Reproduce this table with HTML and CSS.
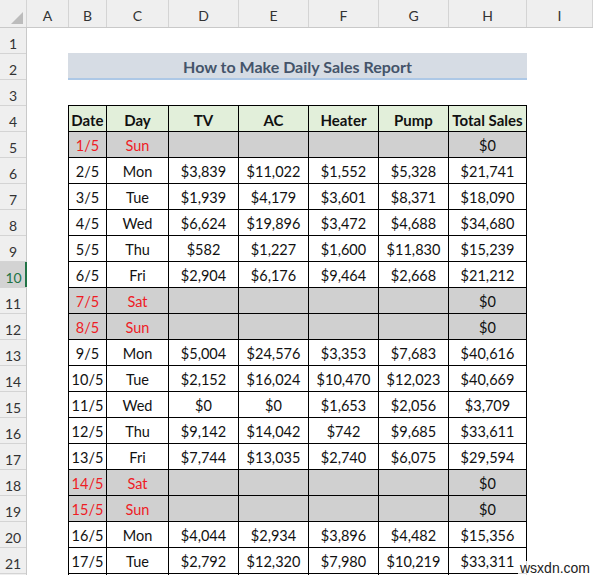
FILE: index.html
```html
<!DOCTYPE html>
<html>
<head>
<meta charset="utf-8">
<link rel="stylesheet" href="styles.css">
</head>
<body>
<div class="app">
  <div class="colbar">
    <div class="corner"><svg width="27" height="28" viewBox="0 0 27 28"><polygon points="23,12 23,24 11,24" fill="#bcbcbc"/></svg></div>
    <div class="ch w-a">A</div>
    <div class="ch w-b">B</div>
    <div class="ch w-c">C</div>
    <div class="ch w-d">D</div>
    <div class="ch w-d">E</div>
    <div class="ch w-d">F</div>
    <div class="ch w-d">G</div>
    <div class="ch w-h">H</div>
    <div class="ch w-i">I</div>
    <div class="ch rest"></div>
  </div>
  <div class="body">
    <div class="rowbar">
      <div class="rh">1</div><div class="rh">2</div><div class="rh">3</div><div class="rh">4</div>
      <div class="rh">5</div><div class="rh">6</div><div class="rh">7</div><div class="rh">8</div>
      <div class="rh">9</div><div class="rh active">10</div><div class="rh">11</div><div class="rh">12</div>
      <div class="rh">13</div><div class="rh">14</div><div class="rh">15</div><div class="rh">16</div>
      <div class="rh">17</div><div class="rh">18</div><div class="rh">19</div><div class="rh">20</div>
      <div class="rh">21</div><div class="rh"></div>
    </div>
    <div class="sheet">
      <div class="title">How to Make Daily Sales Report</div>
      <div class="tbl">
        <div class="c hd">Date</div><div class="c hd">Day</div><div class="c hd">TV</div><div class="c hd">AC</div><div class="c hd">Heater</div><div class="c hd">Pump</div><div class="c hd">Total Sales</div>

        <div class="c we red">1/5</div><div class="c we red">Sun</div><div class="c we"></div><div class="c we"></div><div class="c we"></div><div class="c we"></div><div class="c we">$0</div>
        <div class="c">2/5</div><div class="c">Mon</div><div class="c">$3,839</div><div class="c">$11,022</div><div class="c">$1,552</div><div class="c">$5,328</div><div class="c">$21,741</div>
        <div class="c">3/5</div><div class="c">Tue</div><div class="c">$1,939</div><div class="c">$4,179</div><div class="c">$3,601</div><div class="c">$8,371</div><div class="c">$18,090</div>
        <div class="c">4/5</div><div class="c">Wed</div><div class="c">$6,624</div><div class="c">$19,896</div><div class="c">$3,472</div><div class="c">$4,688</div><div class="c">$34,680</div>
        <div class="c">5/5</div><div class="c">Thu</div><div class="c">$582</div><div class="c">$1,227</div><div class="c">$1,600</div><div class="c">$11,830</div><div class="c">$15,239</div>
        <div class="c">6/5</div><div class="c">Fri</div><div class="c">$2,904</div><div class="c">$6,176</div><div class="c">$9,464</div><div class="c">$2,668</div><div class="c">$21,212</div>
        <div class="c we red">7/5</div><div class="c we red">Sat</div><div class="c we"></div><div class="c we"></div><div class="c we"></div><div class="c we"></div><div class="c we">$0</div>
        <div class="c we red">8/5</div><div class="c we red">Sun</div><div class="c we"></div><div class="c we"></div><div class="c we"></div><div class="c we"></div><div class="c we">$0</div>
        <div class="c">9/5</div><div class="c">Mon</div><div class="c">$5,004</div><div class="c">$24,576</div><div class="c">$3,353</div><div class="c">$7,683</div><div class="c">$40,616</div>
        <div class="c">10/5</div><div class="c">Tue</div><div class="c">$2,152</div><div class="c">$16,024</div><div class="c">$10,470</div><div class="c">$12,023</div><div class="c">$40,669</div>
        <div class="c">11/5</div><div class="c">Wed</div><div class="c">$0</div><div class="c">$0</div><div class="c">$1,653</div><div class="c">$2,056</div><div class="c">$3,709</div>
        <div class="c">12/5</div><div class="c">Thu</div><div class="c">$9,142</div><div class="c">$14,042</div><div class="c">$742</div><div class="c">$9,685</div><div class="c">$33,611</div>
        <div class="c">13/5</div><div class="c">Fri</div><div class="c">$7,744</div><div class="c">$13,035</div><div class="c">$2,740</div><div class="c">$6,075</div><div class="c">$29,594</div>
        <div class="c we red">14/5</div><div class="c we red">Sat</div><div class="c we"></div><div class="c we"></div><div class="c we"></div><div class="c we"></div><div class="c we">$0</div>
        <div class="c we red">15/5</div><div class="c we red">Sun</div><div class="c we"></div><div class="c we"></div><div class="c we"></div><div class="c we"></div><div class="c we">$0</div>
        <div class="c">16/5</div><div class="c">Mon</div><div class="c">$4,044</div><div class="c">$2,934</div><div class="c">$3,896</div><div class="c">$4,482</div><div class="c">$15,356</div>
        <div class="c">17/5</div><div class="c">Tue</div><div class="c">$2,792</div><div class="c">$12,320</div><div class="c">$7,980</div><div class="c">$10,219</div><div class="c">$33,311</div>
        <div class="c"></div><div class="c"></div><div class="c"></div><div class="c"></div><div class="c"></div><div class="c"></div><div class="c"></div>
      </div>
    </div>
  </div>
  <div class="watermark">wsxdn.com</div>
</div>
</body>
</html>
```

FILE: styles.css
```css
* { box-sizing: border-box; }
html, body { margin: 0; padding: 0; background: #fff; }
body { width: 593px; height: 575px; overflow: hidden; font-family: Lato, "Open Sans", sans-serif; }
.app { position: relative; width: 593px; height: 575px; overflow: hidden; }

.colbar { display: flex; height: 28px; background: #efefef; border-bottom: 1px solid #c9c9c9; }
.corner { width: 27px; flex: none; border-right: 1px solid #d4d4d4; }
.corner svg { display: block; }
.ch { flex: none; height: 27px; border-right: 1px solid #d4d4d4; display: flex; align-items: center; justify-content: center; padding-top: 4px; font-size: 14px; color: #333; }
.w-a { width: 42px; }
.w-b { width: 38px; }
.w-c { width: 62px; }
.w-d { width: 70px; }
.w-h { width: 78px; }
.w-i { width: 66px; }
.rest { flex: 1; border-right: none; }

.body { display: flex; }
.rowbar { width: 27px; flex: none; background: #efefef; border-right: 1px solid #c9c9c9; }
.rh { height: 26px; border-bottom: 1px solid #d4d4d4; display: flex; align-items: center; justify-content: center; padding-top: 6px; font-size: 14px; color: #333; }
.rh.active { background: #d3d3d3; color: #217346; box-shadow: inset -2px 0 0 #217346; margin-right: -1px; }

.sheet { flex: 1; padding-left: 41px; padding-top: 25px; }
.title { width: 459px; height: 27px; background: #d6dce4; border-bottom: 2px solid #adc8e6; display: flex; align-items: center; justify-content: center; padding-top: 1px; font-weight: 700; font-size: 16px; color: #44546a; }

.tbl { margin-top: 25px; display: grid; grid-template-columns: 38px 62px 70px 70px 70px 70px 78px; grid-auto-rows: 26px; width: max-content; border-top: 1px solid #000; border-left: 1px solid #000; }
.c { border-right: 1px solid #000; border-bottom: 1px solid #000; display: flex; align-items: center; justify-content: center; padding-top: 2px; font-size: 14.5px; color: #111; white-space: nowrap; }
.hd { background: #e2efda; font-weight: 700; font-size: 15px; }
.we { background: #d0d0d0; }
.red { color: #ee1c25; }

.watermark { position: absolute; left: 518px; top: 561px; padding: 0 2px; background: rgba(255,255,255,0.85); font-family: "Liberation Sans", Arial, sans-serif; font-size: 14px; line-height: 14px; color: #222; }
```
